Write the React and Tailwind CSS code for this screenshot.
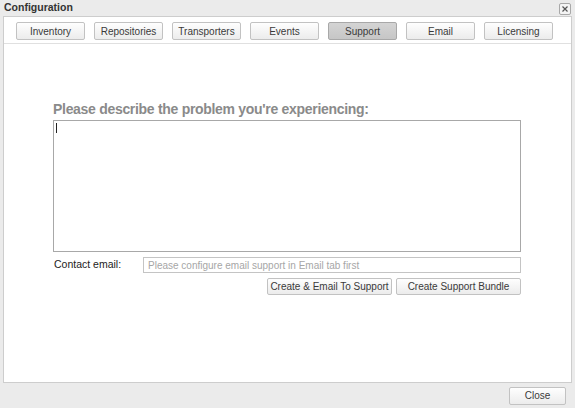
import { useState } from 'react'

const tabs = ['Inventory', 'Repositories', 'Transporters', 'Events', 'Support', 'Email', 'Licensing']

const btn =
  'flex items-center justify-center whitespace-nowrap rounded-[2px] border border-[#c2c2c2] bg-gradient-to-b from-[#fefefe] to-[#ececec] text-[10px] text-[#3a3a3a]'

const App = () => {
  const [active, setActive] = useState('Support')

  return (
    <div
      className="flex h-[408px] w-[575px] flex-col bg-[#ebebeb] text-[#222]"
      style={{ fontFamily: '"Liberation Sans", Arial, sans-serif' }}
    >
      {/* title bar */}
      <div className="flex h-[16px] items-center justify-between pl-[4px] pr-[4px]">
        <span className="text-[10.5px] font-bold text-[#333]">Configuration</span>
        <button className="mt-[2px] flex h-[12px] w-[12px] items-center justify-center rounded-[2px] border border-[#a8a8a8] bg-[#f4f4f4]">
          <svg width="8" height="8" viewBox="0 0 8 8">
            <path d="M1.5 1.5 L6.5 6.5 M6.5 1.5 L1.5 6.5" stroke="#555" strokeWidth="1.2" />
          </svg>
        </button>
      </div>

      {/* panel */}
      <div className="mx-[3px] flex h-[367px] flex-col border border-[#cdcdcd] bg-white">
        <div className="flex gap-[9px] border-b border-[#e0e0e0] pb-[3px] pl-[12px] pt-[5px]">
          {tabs.map((t) => (
            <button
              key={t}
              onClick={() => setActive(t)}
              className={
                active === t
                  ? 'flex h-[18px] w-[69px] items-center justify-center rounded-[2px] border border-[#a8a8a8] bg-gradient-to-b from-[#d4d4d4] to-[#c6c6c6] text-[10px] text-[#3a3a3a]'
                  : 'flex h-[18px] w-[69px] items-center justify-center rounded-[2px] border border-[#c2c2c2] bg-gradient-to-b from-[#fefefe] to-[#ececec] text-[10px] text-[#3a3a3a]'
              }
            >
              {t}
            </button>
          ))}
        </div>

        <div className="flex flex-col pl-[49px] pt-[56px]">
          <h2 className="text-[14px] font-bold leading-[18px] tracking-[-0.3px] text-[#8a8a8a]">
            Please describe the problem you're experiencing:
          </h2>
          <div className="mt-[2px] h-[132px] w-[468px] border border-[#a8a8a8] bg-white pl-[2px] pt-[2px]">
            <div className="h-[10px] w-[1px] bg-[#222]" />
          </div>

          <div className="mt-[5px] flex h-[16px] w-[468px] items-center">
            <span className="w-[90px] pl-[1px] text-[10.5px] text-[#222]">Contact email:</span>
            <div className="flex h-[16px] flex-1 items-center whitespace-nowrap border border-[#c4c4c4] bg-white pl-[4px] text-[10px] text-[#a6a6a6]">
              Please configure email support in Email tab first
            </div>
          </div>

          <div className="mt-[5px] flex w-[468px] justify-end gap-[4px]">
            <button className={`${btn} h-[17px] w-[125px]`}>Create &amp; Email To Support</button>
            <button className={`${btn} h-[17px] w-[125px]`}>Create Support Bundle</button>
          </div>
        </div>
      </div>

      {/* footer */}
      <div className="flex flex-1 items-center justify-end pr-[9px]">
        <button className={`${btn} h-[18px] w-[57px]`}>Close</button>
      </div>
    </div>
  )
}

export default App
